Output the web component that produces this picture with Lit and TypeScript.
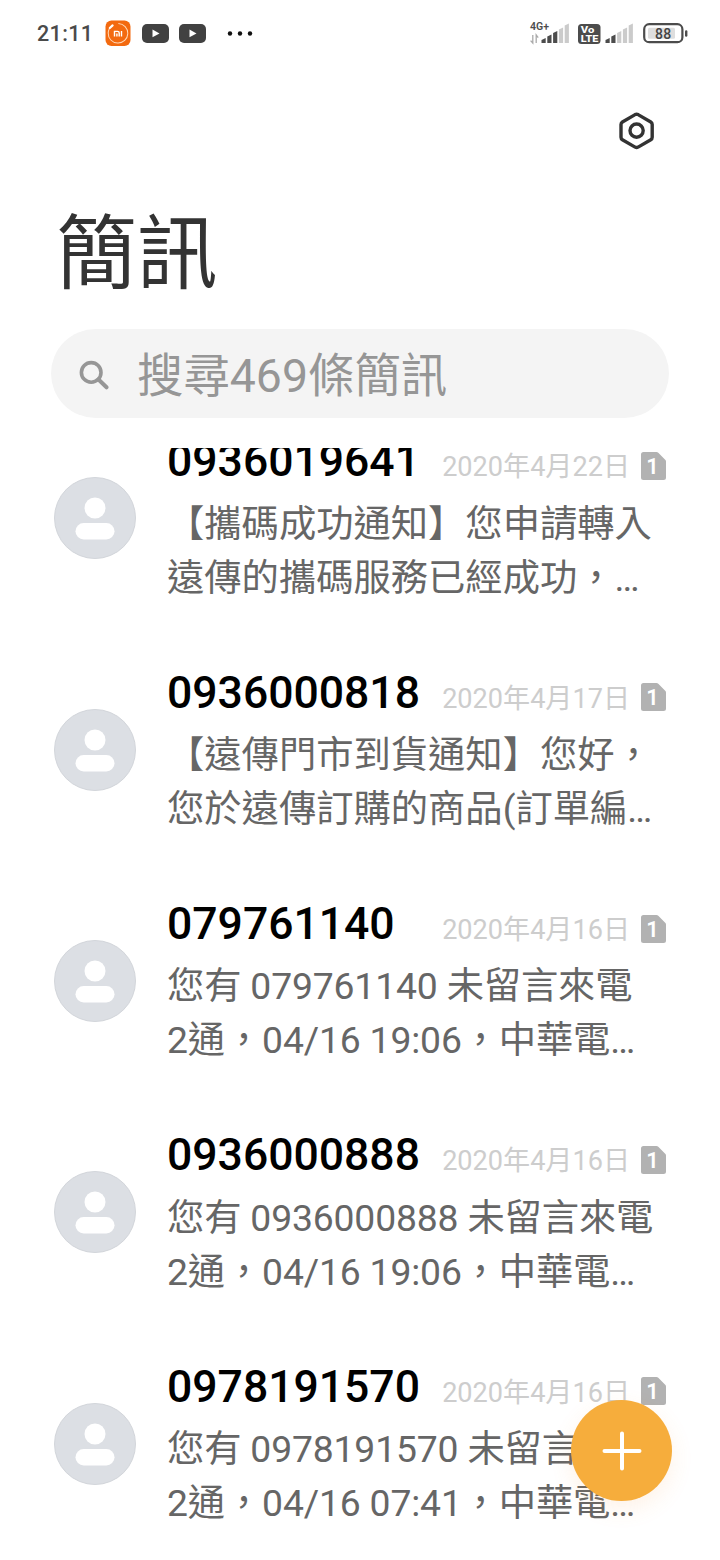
import { LitElement, html, css, svg } from "lit";
import { customElement, property } from "lit/decorators.js";
import { classMap } from "lit/directives/class-map.js";

interface Thread {
  sender: string;
  date: string;
  lines: string[];
}

const THREADS: Thread[] = [
  { sender: "0936019641", date: "2020年4月22日", lines: ["【攜碼成功通知】您申請轉入", "遠傳的攜碼服務已經成功，…"] },
  { sender: "0936000818", date: "2020年4月17日", lines: ["【遠傳門市到貨通知】您好，", "您於遠傳訂購的商品(訂單編…"] },
  { sender: "079761140", date: "2020年4月16日", lines: ["您有 079761140 未留言來電", "2通，04/16 19:06，中華電…"] },
  { sender: "0936000888", date: "2020年4月16日", lines: ["您有 0936000888 未留言來電", "2通，04/16 19:06，中華電…"] },
  { sender: "0978191570", date: "2020年4月16日", lines: ["您有 0978191570 未留言來電", "2通，04/16 07:41，中華電…"] },
];

@customElement("status-bar")
class StatusBar extends LitElement {
  static styles = css`
    :host { display: flex; align-items: center; height: 68px; padding: 0 32px 0 37px; }
    .time { width: 68px; font: 500 21.5px/68px Roboto, sans-serif; letter-spacing: 0.35px; color: #4a4a4a; }
    .left { flex: none; }
    .right { flex: none; margin-left: auto; }
    svg { display: block; overflow: visible; }
    text { font-family: Roboto, sans-serif; }
  `;

  private bars(x: number, filled: number) {
    return [0, 1, 2, 3, 4].map((i) => {
      const left = x + i * 5.8;
      const top = [38, 34.5, 31, 27.5, 23.5][i];
      return svg`<path d=${`M${left} ${top + 2}L${left + 4.2} ${top}V43H${left}Z`} fill=${i < filled ? "#4c4c4c" : "#cbcbcb"}></path>`;
    });
  }

  render() {
    return html`
      <span class="time">21:11</span>
      <svg class="left" width="150" height="68" viewBox="105 0 150 68">
        <rect x="105.5" y="20.5" width="25" height="25.5" rx="6" fill="#f36a10"></rect>
        <circle cx="118" cy="33.3" r="9.8" fill="none" stroke="#ffd9b8" stroke-width="1" stroke-dasharray="50 11.6" transform="rotate(-88 118 33.3)"></circle>
        <path d="M109.8 28L112.6 25.4" stroke="#fff" stroke-width="2.2" stroke-linecap="round"></path>
        <path d="M114.5 36.5V31.4H117.6Q119.2 31.4 119.2 33V36.5M116.9 33.4V36.5M121.5 31V36.5" fill="none" stroke="#fff" stroke-width="1.4"></path>
        ${[142, 179].map((x) => svg`
          <rect x=${x} y="24" width="27" height="19" rx="5" fill="#414141"></rect>
          <path d=${`M${x + 10.5} 29.5L${x + 17.5} 33.5L${x + 10.5} 37.3Z`} fill="#fff"></path>`)}
        ${[230, 240, 250].map((x) => svg`<circle cx=${x} cy="33.5" r="2.2" fill="#111"></circle>`)}
      </svg>
      <svg class="right" width="158" height="68" viewBox="530 0 158 68">
        <text x="530" y="30" font-size="10.4" font-weight="600" textLength="19" lengthAdjust="spacingAndGlyphs" fill="#4c4c4c">4G+</text>
        <path d="M532.8 35V43L530.6 40.6M536.2 43V35L538.2 37.6" fill="none" stroke="#aaa" stroke-width="1.3"></path>
        ${this.bars(541.5, 3)}
        <rect x="578" y="24" width="22.5" height="20" rx="3.5" fill="#4c4c4c"></rect>
        <text x="580.8" y="33" font-size="9.5" font-weight="800" textLength="13.5" lengthAdjust="spacingAndGlyphs" fill="#fff">Vo</text>
        <text x="580.8" y="42.2" font-size="9.5" font-weight="800" textLength="17.5" lengthAdjust="spacingAndGlyphs" fill="#fff">LTE</text>
        ${this.bars(605.5, 2)}
        <rect x="644.2" y="24.2" width="38.2" height="18" rx="5" fill="#fff" stroke="#4c4c4c" stroke-width="2.2"></rect>
        <rect x="648" y="27.7" width="27" height="11" rx="1.5" fill="#dedede"></rect>
        <path d="M686.2 31.5V35.5" stroke="#4c4c4c" stroke-width="2.4" stroke-linecap="round"></path>
        <text x="663.3" y="38.6" text-anchor="middle" font-size="14" font-weight="500" letter-spacing="0.4" fill="#444">88</text>
      </svg>
    `;
  }
}

@customElement("message-row")
class MessageRow extends LitElement {
  @property({ attribute: false }) thread!: Thread;

  static styles = css`
    :host { display: grid; grid-template-columns: 82px 1fr; column-gap: 31px; height: 231.33px; padding: 0 54px; box-sizing: border-box; }
    .avatar { display: block; margin-top: 42.6px; }
    .body { min-width: 0; }
    .head { display: flex; align-items: center; height: 62px; }
    .sender { font: 500 44.5px/54px Roboto, sans-serif; color: #000; height: 54px; margin-bottom: 9px; }
    .date { margin: 3px 0 0 auto; font: 400 27.1px/40px Roboto, "Noto Sans CJK TC", sans-serif; color: #cdcdcd; white-space: nowrap; }
    .sim { flex: none; margin: 0.6px 0 0 11px; }
    .line { height: 54px; font: 400 37.3px/54px Roboto, "Noto Sans CJK TC", sans-serif; color: #666; white-space: pre; text-spacing-trim: space-all; }
    .line.mixed { letter-spacing: -0.16px; }
    text { font: 600 22px Roboto, sans-serif; }
  `;

  render() {
    const { sender, date, lines } = this.thread;
    return html`
      <svg class="avatar" width="82" height="82" viewBox="0 0 82 82">
        <circle cx="41" cy="41" r="40.5" fill="#dcdfe4" stroke="#d2d5da"></circle>
        <circle cx="41" cy="31" r="10.5" fill="#fff"></circle>
        <rect x="21.5" y="46" width="39" height="16.5" rx="8.2" fill="#fff"></rect>
      </svg>
      <div class="body">
        <div class="head">
          <span class="sender">${sender}</span>
          <span class="date">${date}</span>
          <svg class="sim" width="25" height="28" viewBox="0 0 25 28">
            <path d="M2.5 0H15.5Q16.5 0 17.3 .8L24.2 7.7Q25 8.5 25 9.5V25.5Q25 28 22.5 28H2.5Q0 28 0 25.5V2.5Q0 0 2.5 0Z" fill="#b2b2b2"></path>
            <text x="11.6" y="22.2" text-anchor="middle" fill="#fff">1</text>
          </svg>
        </div>
        ${lines.map((line) => html`<div class=${classMap({ line: true, mixed: /\d/.test(line) })}>${line}</div>`)}
      </div>
    `;
  }
}

@customElement("app-root")
class AppRoot extends LitElement {
  static styles = css`
    :host { display: flex; flex-direction: column; position: relative; height: 1560px; overflow: hidden; background: #fff; font-family: Roboto, "Noto Sans CJK TC", sans-serif; }
    .toolbar { display: flex; justify-content: flex-end; height: 121px; padding: 42px 63px 0 0; box-sizing: border-box; flex: none; }
    h1 { margin: 0; padding-left: 56px; height: 140px; box-sizing: border-box; flex: none; font: 400 80.8px/116px "Noto Sans CJK TC", sans-serif; color: #333; }
    .search { display: flex; align-items: center; flex: none; height: 89px; margin: 0 51px; padding-left: 27px; border-radius: 45px; background: #f4f4f4; box-sizing: border-box; }
    .hint { margin: 6px 0 0 27px; font: 400 46.4px/83px Roboto, "Noto Sans CJK TC", sans-serif; color: #969696; white-space: nowrap; }
    .list { flex: 1; min-height: 0; margin-top: 30px; overflow: hidden; }
    .scroller { margin-top: -13.3px; }
    .fab { position: absolute; right: 48px; bottom: 59px; width: 101px; height: 101px; padding: 0; border: 0; border-radius: 50%; background: #f6ad3c; box-shadow: 0 8px 22px rgba(246, 150, 60, 0.12); display: grid; place-items: center; }
  `;

  render() {
    return html`
      <status-bar></status-bar>
      <div class="toolbar">
        <svg width="40" height="42" viewBox="617 110 40 42" fill="none" stroke="#333" stroke-width="3.4" stroke-linejoin="round">
          <path d="M635.1 114.6Q636.6 113.8 638.1 114.6L650.8 122Q652.2 122.9 652.2 124.6V137.3Q652.2 139 650.8 139.8L638.1 147.1Q636.6 147.9 635.1 147.1L622.4 139.8Q621 139 621 137.3V124.6Q621 122.9 622.4 122Z"></path>
          <circle cx="636.6" cy="130.6" r="6.6"></circle>
        </svg>
      </div>
      <h1 lang="zh-TW">簡訊</h1>
      <div class="search">
        <svg width="32" height="32" viewBox="78 358 32 32" fill="none" stroke="#969696" stroke-width="3.6">
          <circle cx="91.2" cy="372.4" r="9.8"></circle>
          <path d="M98.5 379.5L106.5 387.3" stroke-width="4" stroke-linecap="round"></path>
        </svg>
        <span class="hint" lang="zh-TW">搜尋469條簡訊</span>
      </div>
      <div class="list" lang="zh-TW">
        <div class="scroller">
          ${THREADS.map((thread) => html`<message-row .thread=${thread}></message-row>`)}
        </div>
      </div>
      <button class="fab" aria-label="新增簡訊">
        <svg width="40" height="40" viewBox="0 0 40 40" stroke="#fff" stroke-width="4" stroke-linecap="round">
          <path d="M20 2.5V37.5M2.5 20H37.5"></path>
        </svg>
      </button>
    `;
  }
}
